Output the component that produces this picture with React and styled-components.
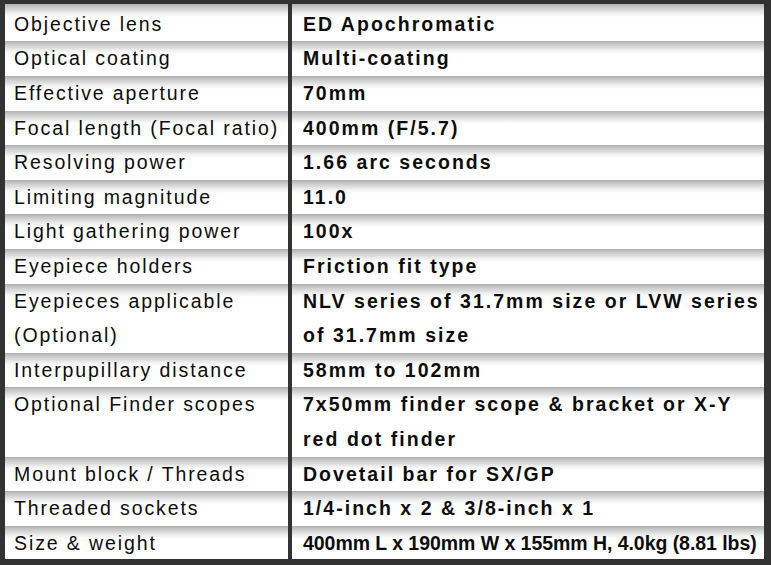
import React from 'react'
import styled, { createGlobalStyle } from 'styled-components'

const GlobalStyle = createGlobalStyle`
  html, body {
    margin: 0;
    padding: 0;
    background: #ffffff;
  }
`

const font = "font-family: 'Liberation Sans', Arial, Helvetica, sans-serif"
const unit = 34.6

const specs = [
  ['Objective lens', 'ED Apochromatic'],
  ['Optical coating', 'Multi-coating'],
  ['Effective aperture', '70mm'],
  ['Focal length (Focal ratio)', '400mm (F/5.7)'],
  ['Resolving power', '1.66 arc seconds'],
  ['Limiting magnitude', '11.0'],
  ['Light gathering power', '100x'],
  ['Eyepiece holders', 'Friction fit type'],
  [['Eyepieces applicable', '(Optional)'], ['NLV series of 31.7mm size or LVW series', 'of 31.7mm size']],
  ['Interpupillary distance', '58mm to 102mm'],
  ['Optional Finder scopes', ['7x50mm finder scope & bracket or X-Y', 'red dot finder']],
  ['Mount block / Threads', 'Dovetail bar for SX/GP'],
  ['Threaded sockets', '1/4-inch x 2 & 3/8-inch x 1'],
  ['Size & weight', '400mm L x 190mm W x 155mm H, 4.0kg (8.81 lbs)', true],
]

const Frame = styled.div`
  width: 771px;
  height: 565px;
  box-sizing: border-box;
  background: #323232;
  padding: 4px 7px 6px 5px;
  overflow: hidden;
`

const Table = styled.div`
  display: grid;
  grid-template-columns: 283px 1fr;
  column-gap: 4px;
  height: 100%;
  overflow: hidden;
`

const Cell = styled.div`
  background: linear-gradient(to bottom, #b0b0b0 0px, #cdcdcd 4px, #f2f2f2 10px, #ffffff 13px, #ffffff 100%);
  padding-left: ${p => (p.$value ? '11px' : '9px')};
  padding-top: ${p => (p.$first ? '2.8px' : '0')};
  line-height: ${unit}px;
  font-size: 19.5px;
  color: #0c0c0c;
  white-space: nowrap;
  ${font};
  font-weight: ${p => (p.$value ? 700 : 400)};
  letter-spacing: ${p => (p.$tight ? '-0.05px' : p.$value ? '2.03px' : '1.9px')};
`

const Line = styled.div``

function Lines({ text }) {
  const list = Array.isArray(text) ? text : [text]
  return list.map((t, i) => <Line key={i}>{t}</Line>)
}

function App() {
  return (
    <>
      <GlobalStyle />
      <Frame>
        <Table>
          {specs.map(([label, value, tight], i) => (
            <React.Fragment key={i}>
              <Cell $first={i === 0}>
                <Lines text={label} />
              </Cell>
              <Cell $value $first={i === 0} $tight={tight}>
                <Lines text={value} />
              </Cell>
            </React.Fragment>
          ))}
        </Table>
      </Frame>
    </>
  )
}

export default App
